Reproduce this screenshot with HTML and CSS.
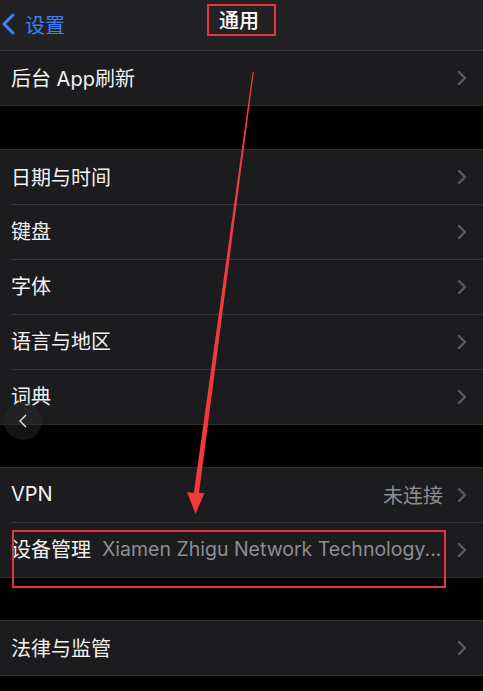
FILE: index.html
```html
<!DOCTYPE html>
<html lang="zh-CN">
<head>
<meta charset="utf-8">
<link rel="stylesheet" href="styles.css">
</head>
<body>
<div class="screen">
  <header class="nav">
    <div class="back">
      <svg class="back-icon" width="16" height="22" viewBox="0 0 16 22"><polyline points="12,2 3,11 12,20" fill="none" stroke="#3b82f6" stroke-width="3" stroke-linecap="round" stroke-linejoin="round"/></svg>
      <span>设置</span>
    </div>
    <div class="title">通用</div>
  </header>

  <section class="group">
    <div class="row"><span class="label">后台 App刷新</span><span class="chev"></span></div>
  </section>

  <section class="group">
    <div class="row"><span class="label">日期与时间</span><span class="chev"></span></div>
    <div class="row"><span class="label">键盘</span><span class="chev"></span></div>
    <div class="row"><span class="label">字体</span><span class="chev"></span></div>
    <div class="row"><span class="label">语言与地区</span><span class="chev"></span></div>
    <div class="row"><span class="label">词典</span><span class="chev"></span></div>
  </section>

  <section class="group">
    <div class="row"><span class="label">VPN</span><span class="value">未连接</span><span class="chev"></span></div>
    <div class="row"><span class="label">设备管理</span><span class="value detail">Xiamen Zhigu Network Technology...</span><span class="chev"></span></div>
  </section>

  <section class="group">
    <div class="row"><span class="label">法律与监管</span><span class="chev"></span></div>
  </section>

  <div class="float-back">
    <svg width="10" height="14" viewBox="0 0 10 14"><polyline points="8,1 2,7 8,13" fill="none" stroke="#e6e6e6" stroke-width="1.4"/></svg>
  </div>
  <div class="mark mark-title"></div>
  <div class="mark mark-device"></div>
  <svg class="arrow" width="483" height="691" viewBox="0 0 483 691">
    <polygon points="252.6,72 253.8,72 199,493 204.5,493 195.5,514 187,492 193.8,493" fill="#f23a3c"/>
  </svg>
</div>
</body>
</html>
```
FILE: styles.css
```css
* { box-sizing: border-box; }
html, body { margin: 0; padding: 0; background: #000; }
body {
  font-family: Inter, "Noto Sans CJK SC", sans-serif;
  color: #f2f2f2;
}
.screen {
  position: relative;
  width: 483px;
  height: 691px;
  overflow: hidden;
  background: #000;
}
.nav {
  position: relative;
  height: 51px;
  background: #222224;
  border-bottom: 1px solid #38383a;
  display: flex;
  align-items: center;
}
.back {
  display: flex;
  align-items: center;
  gap: 8px;
  padding-left: 1px;
  color: #3a82f0;
  font-size: 20px;
  margin-top: -2px;
}
.back-icon { display: block; }
.title {
  position: absolute;
  left: 0;
  right: 0;
  top: 5px;
  text-align: center;
  font-size: 20px;
  font-weight: 500;
  color: #ffffff;
  padding-right: 5px;
}
.group {
  background: #1c1c1e;
  border-top: 1px solid #2e2e30;
  border-bottom: 1px solid #2e2e30;
  margin-bottom: 42px;
}
.nav + .group { border-top: none; margin-bottom: 43px; }
.row {
  height: 55px;
  display: flex;
  align-items: center;
  padding-left: 11px;
  padding-right: 16px;
  position: relative;
}
.row + .row::before {
  content: "";
  position: absolute;
  left: 11px;
  right: 0;
  top: 0;
  border-top: 1px solid #353537;
}
.group .row:first-child { height: 54px; }
.label {
  font-size: 20px;
  color: #f2f2f2;
  white-space: nowrap;
  padding-bottom: 2px;
}
.value {
  margin-left: auto;
  font-size: 20px;
  color: #8d8d92;
  white-space: nowrap;
  padding-right: 14px;
  padding-bottom: 2px;
}
.detail {
  flex: 1;
  margin-left: 11px;
  min-width: 0;
  font-size: 19.5px;
  padding-right: 10px;
}
.chev {
  margin-left: auto;
  width: 10px;
  height: 16px;
  flex: none;
  background: no-repeat center / 10px 16px url("data:image/svg+xml,%3Csvg xmlns='http://www.w3.org/2000/svg' width='10' height='16' viewBox='0 0 10 16'%3E%3Cpolyline points='2,2 8,8 2,14' fill='none' stroke='%235b5b60' stroke-width='2.4' stroke-linecap='round' stroke-linejoin='round'/%3E%3C/svg%3E");
}
.value + .chev { margin-left: 0; }
.float-back {
  position: absolute;
  left: 4px;
  top: 402px;
  width: 38px;
  height: 38px;
  border-radius: 50%;
  background: rgba(45, 45, 47, 0.45);
  display: flex;
  align-items: center;
  justify-content: center;
}
.mark {
  position: absolute;
  border: 2px solid #e3373d;
}
.mark-title { left: 207px; top: 4px; width: 69px; height: 32px; }
.mark-device { left: 12px; top: 530px; width: 434px; height: 58px; }
.arrow { position: absolute; left: 0; top: 0; pointer-events: none; }
```
